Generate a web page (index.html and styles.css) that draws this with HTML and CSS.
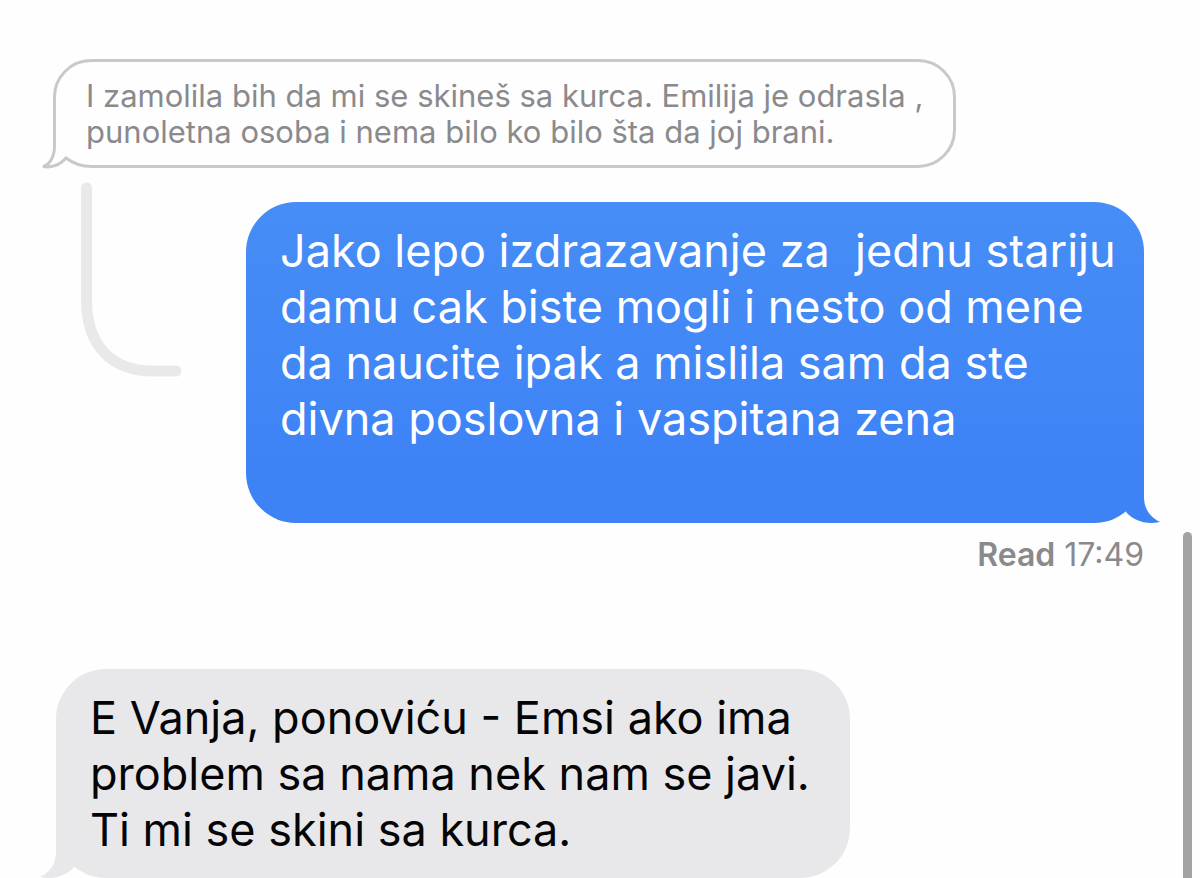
FILE: index.html
```html
<!DOCTYPE html>
<html lang="sr-Latn">
<head>
  <meta charset="UTF-8" />
  <meta name="viewport" content="width=device-width, initial-scale=1.0" />
  <title>Messages</title>
  <link rel="stylesheet" href="styles.css">
</head>
<body>
  <main class="thread">
    <blockquote class="bubble quoted">
      <svg class="quoted-tail" viewBox="0 0 52 42" aria-hidden="true">
        <path class="mask" d="M10 0H52V42H10Z" />
        <path class="line" d="M14.500 0V18C14.500 28 10 37 3 38.500C12 40 20 37 26 30C33 35.500 42 38.500 52 38.500" />
      </svg>
      <p>I zamolila bih da mi se skineš sa kurca. Emilija je odrasla ,<br>punoletna osoba i nema bilo ko bilo šta da joj brani.</p>
    </blockquote>

    <div class="reply">
      <svg class="connector" viewBox="0 0 101 195" aria-hidden="true">
        <path d="M5.500 6V118C5.500 164 31 189 72 189H95" />
      </svg>
      <div class="bubble sent">
        <p>Jako lepo izdrazavanje za&nbsp; jednu stariju<br>damu cak biste mogli i nesto od mene<br>da naucite ipak a mislila sam da ste<br>divna poslovna i vaspitana zena</p>
        <svg class="tail" viewBox="0 0 50 52" aria-hidden="true">
          <path d="M34 0V26C34 38 40 46 50 51C36 54 24 50 16 41L20 20Z" />
        </svg>
      </div>
    </div>

    <div class="receipt"><strong>Read</strong> <time>17:49</time></div>

    <div class="bubble received">
      <p>E Vanja, ponoviću - Emsi ako ima<br>problem sa nama nek nam se javi.<br>Ti mi se skini sa kurca.</p>
      <svg class="tail" viewBox="0 0 50 52" aria-hidden="true">
        <path d="M34 0V26C34 38 40 46 50 51C36 54 24 50 16 41L20 20Z" />
      </svg>
    </div>
  </main>
  <div class="scroll-thumb"></div>
</body>
</html>
```

FILE: styles.css
```css
* { margin: 0; padding: 0; box-sizing: border-box; }

body {
  background: #fefefe;
  color: #050507;
  font-family: Inter, "Liberation Sans", sans-serif;
  overflow-x: hidden;
}

.thread {
  display: flex;
  flex-direction: column;
  padding: 59px 56px 0;
}

.bubble {
  position: relative;
  border-radius: 50px;
  padding: 21px 34px 20px;
  font-size: 45px;
  line-height: 56px;
  white-space: nowrap;
}

/* message being replied to */
.quoted {
  isolation: isolate;
  width: 83%;
  margin-left: -3px;
  padding: 16px 30px 15px;
  border: 3px solid #c9c9cb;
  border-radius: 38px;
  color: #8a8a8d;
  font-size: 31px;
  line-height: 36px;
}
.quoted-tail {
  position: absolute;
  left: -16px;
  bottom: -5px;
  z-index: -1;
  width: 52px;
  height: 42px;
}
.quoted-tail .mask { fill: #fefefe; }
.quoted-tail .line { fill: none; stroke: #c9c9cb; stroke-width: 3; }

.reply {
  display: flex;
  justify-content: space-between;
  align-items: flex-start;
  margin-top: 14px;
}
.connector {
  flex: none;
  width: 101px;
  height: 195px;
  margin-left: 25px;
}
.connector path {
  fill: none;
  stroke: #e9e9ea;
  stroke-width: 11;
  stroke-linecap: round;
}

.sent {
  width: 898px;
  margin-top: 20px;
  padding-bottom: 76px;
  background: linear-gradient(#468df6, #3e83f6 85%);
  color: #fff;
}

/* little hook in the bottom corner */
.tail {
  position: absolute;
  right: -16px;
  bottom: 0;
  width: 50px;
  height: 52px;
}
.sent .tail { fill: #3e83f6; }
.received .tail {
  right: auto;
  left: -16px;
  transform: scaleX(-1);
  fill: #e8e8ea;
}

.receipt {
  margin-top: 14px;
  text-align: right;
  font-size: 32px;
  line-height: 36px;
  color: #8a8a8d;
}
.receipt strong { font-weight: 600; }

.received {
  width: 73%;
  margin-top: 96px;
  background: #e8e8ea;
}

.scroll-thumb {
  position: fixed;
  top: 532px;
  right: 8px;
  bottom: -8px;
  width: 9px;
  border-radius: 5px;
  background: #a3a3a3;
}
```
